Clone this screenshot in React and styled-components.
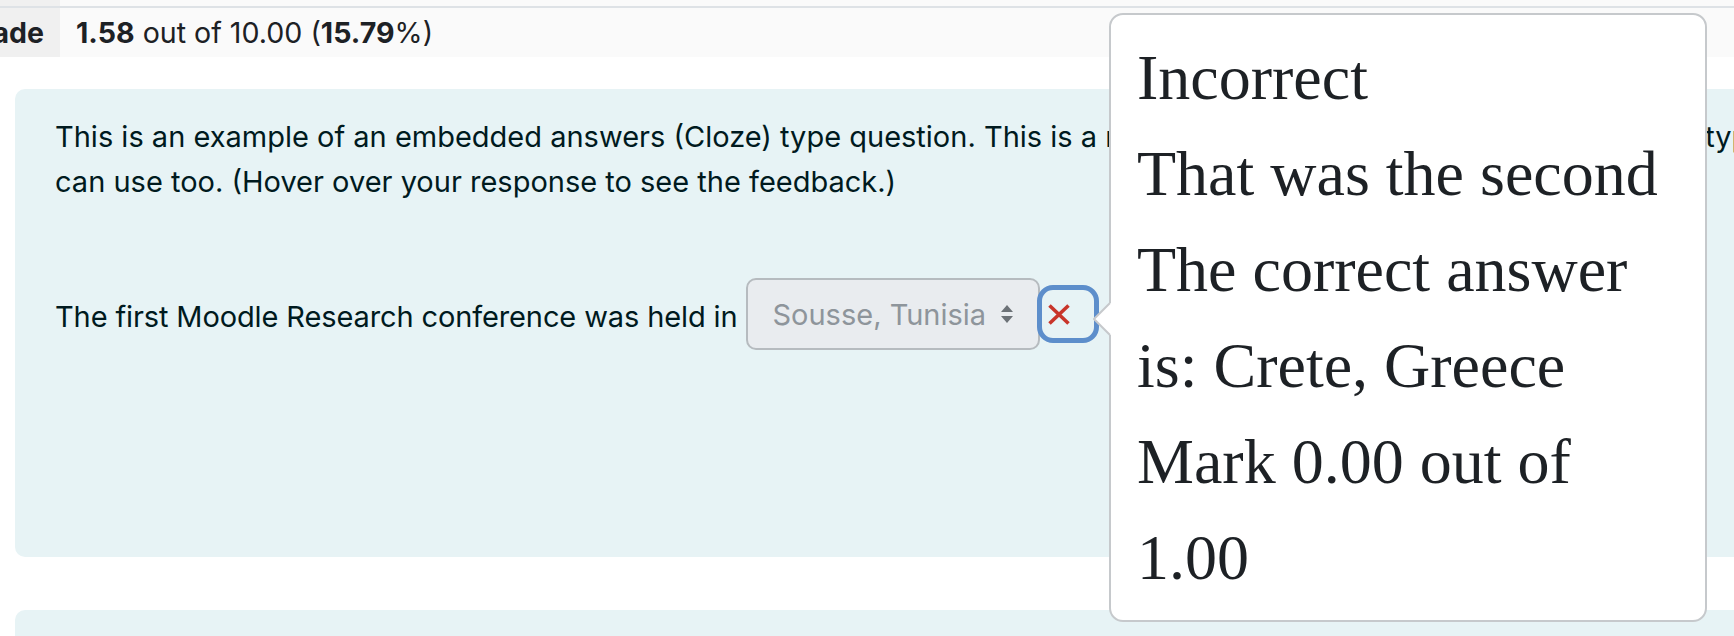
import React from 'react';
import styled, { createGlobalStyle } from 'styled-components';

const GlobalStyle = createGlobalStyle`
  html, body { margin: 0; padding: 0; background: #ffffff; overflow: hidden; }
  body { font-family: Inter, "Noto Sans", sans-serif; color: #1d2125; }
  * { box-sizing: border-box; }
`;

const Page = styled.div`
  position: relative;
  width: 1734px;
  height: 636px;
  overflow: hidden;
`;

const SummaryTable = styled.div`
  display: flex;
  flex-direction: column;
`;

const SummaryRow = styled.div`
  display: grid;
  grid-template-columns: 60px 1fr;
  height: ${(p) => p.$h}px;
  border-top: ${(p) => (p.$border ? '2px solid #dee2e6' : 'none')};
`;

const HeadCell = styled.div`
  background: #f0f0f0;
  display: flex;
  justify-content: flex-end;
  align-items: center;
  overflow: hidden;
  white-space: nowrap;
  padding-right: 16px;
  font-weight: 700;
  font-size: 28.5px;
`;

const ValueCell = styled.div`
  background: #fafafa;
  display: flex;
  align-items: center;
  padding-left: 16px;
  font-size: 28.6px;
  white-space: nowrap;
  b { font-weight: 700; }
`;

const QuestionPanel = styled.div`
  margin: ${(p) => p.$top}px 0 0 15px;
  width: 2100px;
  height: ${(p) => p.$h}px;
  background: #e7f3f5;
  border-radius: 10px;
  padding: 25px 40px;
  color: #001a1e;
  font-size: 29px;
  line-height: 45px;
`;

const Para = styled.p`
  margin: 0;
  white-space: nowrap;
`;

const HiddenRun = styled.span`
  letter-spacing: -0.1px;
`;

const AnswerLine = styled.div`
  margin-top: 74px;
  display: flex;
  align-items: center;
  white-space: nowrap;
`;

const AnswerText = styled.span`
  padding-top: 4px;
  letter-spacing: -0.12px;
`;

const FakeSelect = styled.span`
  display: inline-flex;
  align-items: center;
  justify-content: space-between;
  width: 294px;
  height: 72px;
  margin-left: 9px;
  border: 2px solid #b6bbbf;
  border-radius: 10px;
  background: #e9ecef;
  padding: 0 23px 0 24px;
  color: #8e959b;
`;

const FeedbackRing = styled.span`
  display: inline-flex;
  align-items: center;
  width: 62px;
  height: 58px;
  margin-left: -3px;
  border: 5px solid #5d8ecb;
  border-radius: 16px;
  padding-left: 6px;
`;

const Popover = styled.div`
  position: absolute;
  left: 1109px;
  top: 13px;
  width: 598px;
  height: 609px;
  background: #ffffff;
  border: 2px solid #c6c9cc;
  border-radius: 14px;
  padding: 15px 24px 14px 26px;
  font-family: "Liberation Serif", "Times New Roman", serif;
  font-size: 64px;
  line-height: 96px;
  color: #1d2125;
`;

const PopArrow = styled.svg`
  position: absolute;
  left: -18px;
  top: 286px;
`;

const PopLine = styled.div``;

const SelectArrows = () => (
  <svg width="16" height="20" viewBox="0 0 16 20">
    <path d="M8 1 L14 8 L2 8 Z" fill="#6c7277" />
    <path d="M2 12 L14 12 L8 19 Z" fill="#6c7277" />
  </svg>
);

const CrossIcon = () => (
  <svg width="22" height="21" viewBox="0 0 22 21">
    <path d="M1.5 1.5 L20.5 19.5 M20.5 1.5 L1.5 19.5" stroke="#c8352a" strokeWidth="3.6" />
  </svg>
);

export default function App() {
  return (
    <Page>
      <GlobalStyle />
      <SummaryTable>
        <SummaryRow $h={6}>
          <HeadCell />
          <ValueCell />
        </SummaryRow>
        <SummaryRow $h={51} $border>
          <HeadCell>Grade</HeadCell>
          <ValueCell>
            <b>1.58</b>&nbsp;out of 10.00 (<b>15.79</b>%)
          </ValueCell>
        </SummaryRow>
      </SummaryTable>

      <QuestionPanel $top={32} $h={468}>
        <Para>
          This is an example of an embedded answers (Cloze) type question. This is a{' '}
          <HiddenRun>multi-choice question, but there are several</HiddenRun> types you
          <br />
          can use too. (Hover over your response to see the feedback.)
        </Para>
        <AnswerLine>
          <AnswerText>The first Moodle Research conference was held in</AnswerText>
          <FakeSelect>
            <span>Sousse, Tunisia</span>
            <SelectArrows />
          </FakeSelect>
          <FeedbackRing>
            <CrossIcon />
          </FeedbackRing>
        </AnswerLine>
      </QuestionPanel>

      <QuestionPanel $top={53} $h={200} />

      <Popover>
        <PopArrow width="20" height="36" viewBox="0 0 20 36">
          <polygon points="17,2 1,18 17,34 20,34 20,2" fill="#ffffff" />
          <polyline points="17,2 1,18 17,34" fill="none" stroke="#c6c9cc" strokeWidth="2" />
        </PopArrow>
        <PopLine>Incorrect</PopLine>
        <PopLine>That was the second</PopLine>
        <PopLine>The correct answer is: Crete, Greece</PopLine>
        <PopLine>Mark 0.00 out of 1.00</PopLine>
      </Popover>
    </Page>
  );
}
